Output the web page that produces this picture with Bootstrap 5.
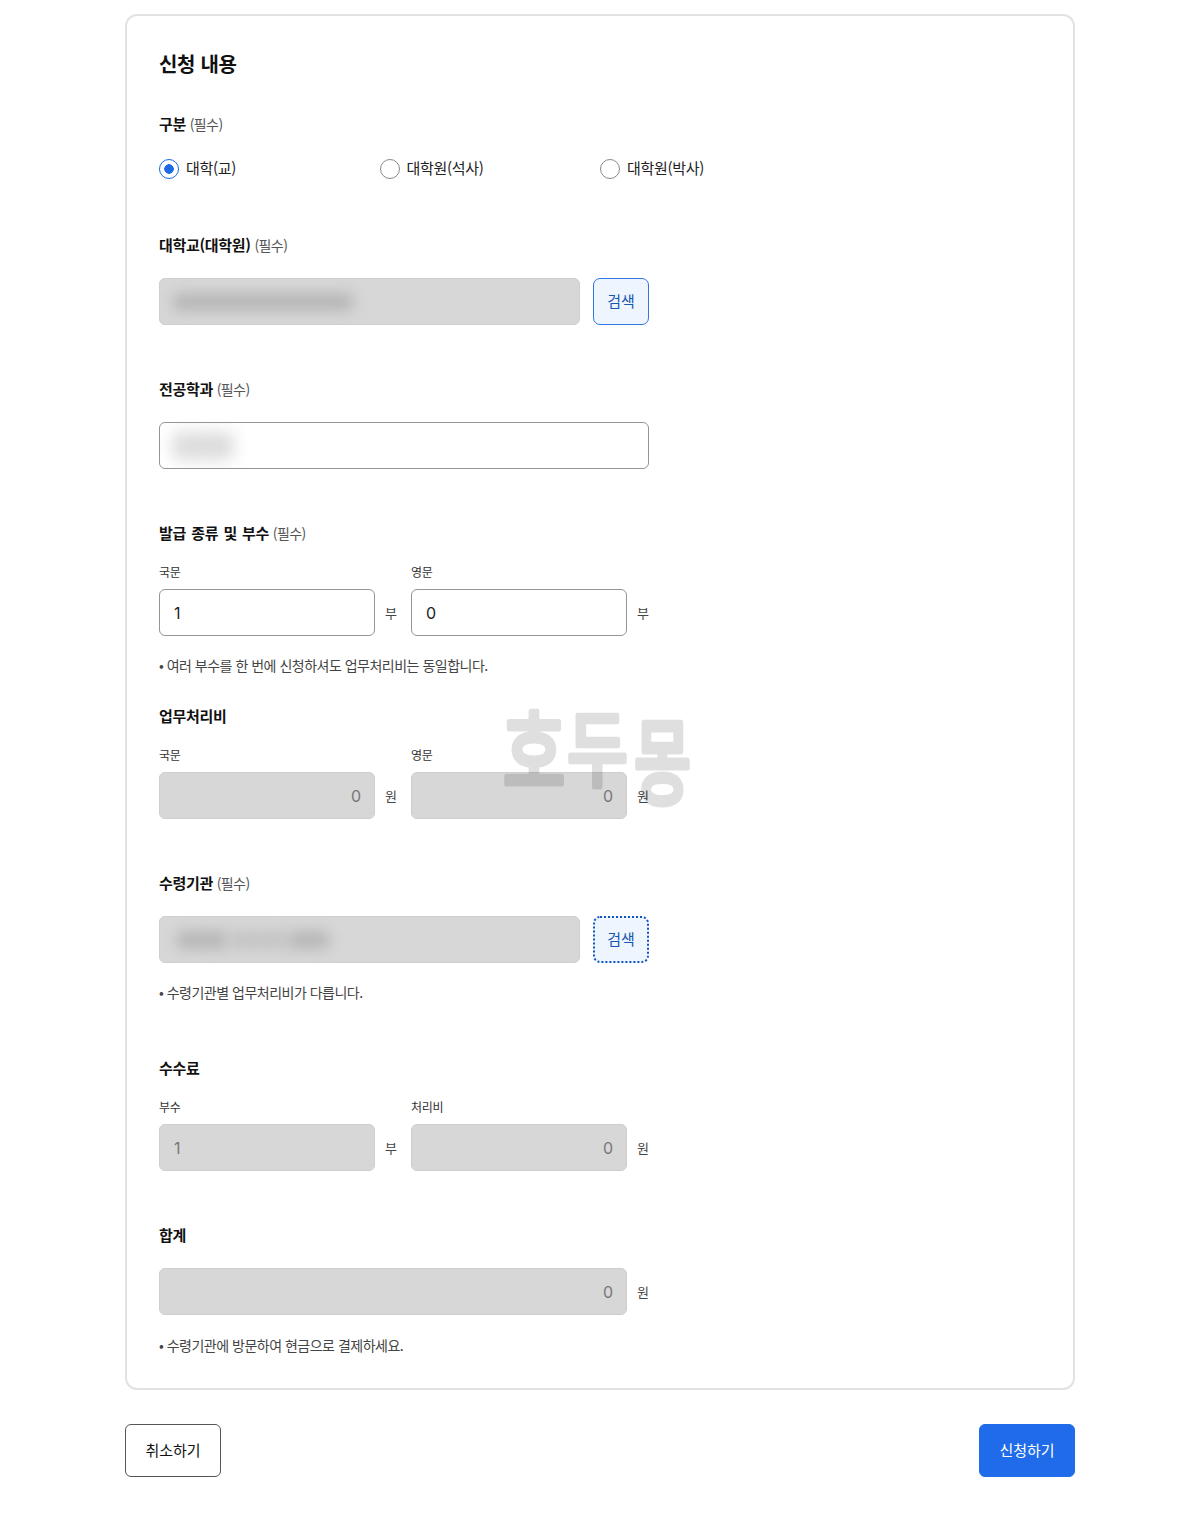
<!DOCTYPE html>
<html lang="ko">
<head>
  <meta charset="UTF-8" />
  <title>신청 내용</title>
  <link href="https://cdn.jsdelivr.net/npm/bootstrap@5.3.0/dist/css/bootstrap.min.css" rel="stylesheet">
  <style>
    body {
      background: #fff;
      color: #111;
      font-family: "Noto Sans CJK KR", "Noto Sans", sans-serif;
      letter-spacing: -0.3px;
    }
    .page-wrap { width: 950px; margin: 0 auto; padding: 14px 0 40px; position: relative; }
    .form-card { border: 2px solid #e2e2e2; border-radius: 12px; padding: 33px 32px; height: 1376px; }
    .form-title { font-size: 20px; font-weight: 700; line-height: 30px; margin: 0 0 34px; }
    .field-label { font-size: 15px; font-weight: 700; line-height: 22px; height: 22px; margin: 0; display: block; word-spacing: 1.3px; }
    .field-label small { font-size: 14px; font-weight: 400; color: #555; margin-left: -1.5px; letter-spacing: -0.6px; line-height: 1; }
    .sub-label { font-size: 12px; line-height: 18px; margin: 0 0 8px; color: #333; display: block; }
    .field-note { font-size: 14px; line-height: 20px; color: #444; margin: 19px 0 0; letter-spacing: -0.5px; }
    .note-low { margin-top: 20px; }
    .field { width: 490px; margin-bottom: 53px; }
    .field-tight { margin-bottom: 30px; }
    .field-wide { margin-bottom: 55px; }
    .field-gap { margin-top: 22px; }
    .sub-gap { margin-top: 19px; }

    .radio-row { display: grid; grid-template-columns: repeat(3, 220.5px); margin-top: 21.5px; height: 24px; width: 662px; margin-bottom: 53.5px; }
    .radio-item { display: flex; align-items: center; gap: 7px; font-size: 15px; color: #222; }
    .radio-item .form-check-input { width: 20px; height: 20px; margin: 0; border: 1.5px solid #8a8a8a; }
    .radio-item .form-check-input:checked {
      background-color: #fff;
      border-color: #1d6ae5;
      background-image: radial-gradient(circle, #1d6ae5 0 4.5px, transparent 5px);
    }

    .form-control.field-input {
      height: 47px;
      border: 1.5px solid #959595;
      border-radius: 6px;
      font-family: Inter, "Noto Sans", sans-serif;
      font-size: 16px;
      color: #222;
      padding: 0 13px 0 14px;
      letter-spacing: 0;
    }
    .form-control.field-input:disabled, .form-control.is-locked {
      background: #d7d7d7;
      border-color: #cecece;
      color: #777;
      opacity: 1;
    }
    .blur-box { display: flex; align-items: center; overflow: hidden; }
    .form-control.field-input.blur-box { padding: 0 12px; }
    .blur-bit { height: 18px; border-radius: 8px; background: #b6b6b6; filter: blur(7px); flex: none; }
    .blur-soft { background: #c4c4c4; }
    .blur-light { background: #dcdcdc; height: 28px; filter: blur(8px); }

    .btn.btn-find {
      width: 56px; height: 47px; padding: 0; flex: none;
      background: #eef5ff; border: 1.5px solid #2f76e0; border-radius: 7px;
      color: #1a56b0; font-size: 15px;
    }
    .btn.btn-find-focus { border: 2.5px dotted #0f56c4; }
    .pair { display: grid; grid-template-columns: 238px 238px; column-gap: 14px; }
    .unit-line { display: flex; align-items: center; gap: 10px; }
    .unit-line .form-control { flex: 1; min-width: 0; }
    .unit-text { font-size: 13px; color: #444; width: 12px; flex: none; white-space: nowrap; letter-spacing: 0; }

    .action-row { display: flex; justify-content: space-between; margin-top: 34px; }
    .btn.btn-action { width: 96px; height: 53px; padding: 0; border-radius: 6px; font-size: 15px; }
    .btn.btn-cancel { background: #fff; border: 1.5px solid #555; color: #111; }
    .btn.btn-apply { background: #1f6bea; border: 1px solid #1f6bea; color: #fff; }

    .stamp { position: absolute; left: 375px; top: 693px; pointer-events: none; overflow: visible; }
    .stamp text {
      font-family: "Noto Sans CJK KR", sans-serif;
      font-size: 72px; font-weight: 500; letter-spacing: 0;
      stroke: #000; stroke-width: 4; stroke-linejoin: round; stroke-linecap: round;
    }
  </style>
</head>
<body>
  <div class="page-wrap">
    <form class="form-card bg-white">
      <h2 class="form-title">신청 내용</h2>

      <label class="field-label">구분 <small>(필수)</small></label>
      <div class="radio-row">
        <label class="radio-item"><input class="form-check-input" type="radio" name="kind" checked>대학(교)</label>
        <label class="radio-item"><input class="form-check-input" type="radio" name="kind">대학원(석사)</label>
        <label class="radio-item"><input class="form-check-input" type="radio" name="kind">대학원(박사)</label>
      </div>

      <div class="field">
        <label class="field-label">대학교(대학원) <small>(필수)</small></label>
        <div class="d-flex field-gap" style="gap: 13px">
          <div class="form-control field-input is-locked blur-box">
            <div class="blur-bit" style="width: 182px"></div>
          </div>
          <button type="button" class="btn btn-find">검색</button>
        </div>
      </div>

      <div class="field">
        <label class="field-label">전공학과 <small>(필수)</small></label>
        <div class="form-control field-input blur-box field-gap">
          <div class="blur-bit blur-light" style="width: 62px"></div>
        </div>
      </div>

      <div class="field field-tight">
        <label class="field-label">발급 종류 및 부수 <small>(필수)</small></label>
        <div class="pair sub-gap">
          <div>
            <span class="sub-label">국문</span>
            <div class="unit-line"><input class="form-control field-input" value="1"><span class="unit-text">부</span></div>
          </div>
          <div>
            <span class="sub-label">영문</span>
            <div class="unit-line"><input class="form-control field-input" value="0"><span class="unit-text">부</span></div>
          </div>
        </div>
        <p class="field-note">• 여러 부수를 한 번에 신청하셔도 업무처리비는 동일합니다.</p>
      </div>

      <div class="field">
        <label class="field-label">업무처리비</label>
        <div class="pair sub-gap">
          <div>
            <span class="sub-label">국문</span>
            <div class="unit-line"><input class="form-control field-input text-end" value="0" disabled><span class="unit-text">원</span></div>
          </div>
          <div>
            <span class="sub-label">영문</span>
            <div class="unit-line"><input class="form-control field-input text-end" value="0" disabled><span class="unit-text">원</span></div>
          </div>
        </div>
      </div>

      <div class="field field-wide">
        <label class="field-label">수령기관 <small>(필수)</small></label>
        <div class="d-flex field-gap" style="gap: 13px">
          <div class="form-control field-input is-locked blur-box">
            <div class="blur-bit" style="width: 52px; margin-left: 4px"></div>
            <div class="blur-bit blur-soft" style="width: 60px"></div>
            <div class="blur-bit" style="width: 42px"></div>
          </div>
          <button type="button" class="btn btn-find btn-find-focus">검색</button>
        </div>
        <p class="field-note">• 수령기관별 업무처리비가 다릅니다.</p>
      </div>

      <div class="field">
        <label class="field-label">수수료</label>
        <div class="pair sub-gap">
          <div>
            <span class="sub-label">부수</span>
            <div class="unit-line"><input class="form-control field-input" value="1" disabled><span class="unit-text">부</span></div>
          </div>
          <div>
            <span class="sub-label">처리비</span>
            <div class="unit-line"><input class="form-control field-input text-end" value="0" disabled><span class="unit-text">원</span></div>
          </div>
        </div>
      </div>

      <div class="field mb-0">
        <label class="field-label">합계</label>
        <div class="unit-line field-gap"><input class="form-control field-input text-end" value="0" disabled><span class="unit-text">원</span></div>
        <p class="field-note note-low">• 수령기관에 방문하여 현금으로 결제하세요.</p>
      </div>
    </form>

    <div class="action-row">
      <button type="button" class="btn btn-action btn-cancel">취소하기</button>
      <button type="button" class="btn btn-action btn-apply">신청하기</button>
    </div>

    <svg class="stamp" width="200" height="120" viewBox="0 0 200 120">
      <g opacity="0.12">
        <text transform="translate(3 92) scale(.94 1.25)">호</text>
        <text transform="translate(67 87) scale(.92 1.15)">두</text>
        <text transform="translate(134 104) scale(.86 1.3)">몽</text>
      </g>
    </svg>
  </div>
  <script src="https://cdn.jsdelivr.net/npm/bootstrap@5.3.0/dist/js/bootstrap.bundle.min.js"></script>
</body>
</html>
